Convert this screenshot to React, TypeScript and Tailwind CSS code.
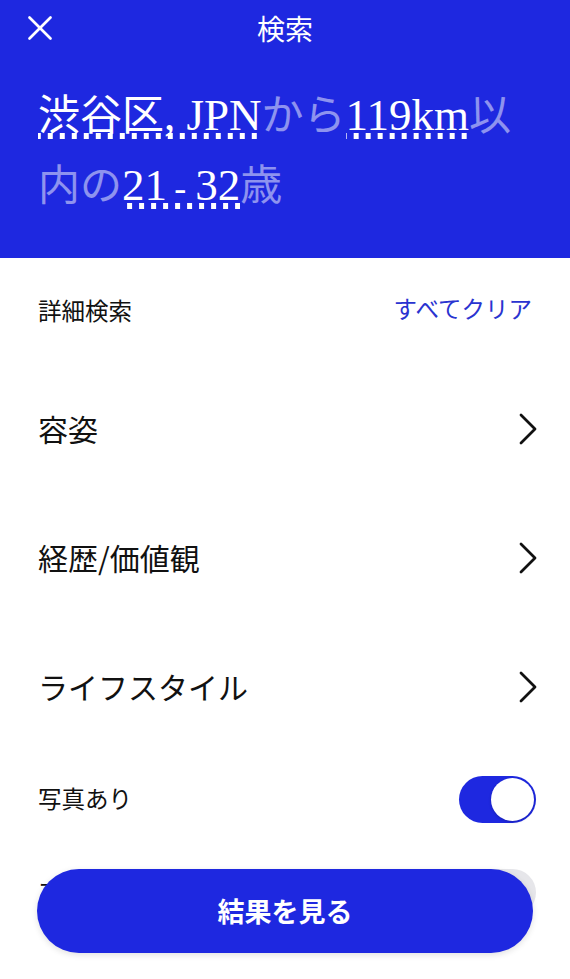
import React from "react";

const sans = { fontFamily: '"Noto Sans CJK JP", "Noto Sans", sans-serif' };

function Chevron() {
  return (
    <svg width="18" height="32" viewBox="0 0 18 32" fill="none" className="shrink-0">
      <polyline points="2,2 16,16 2,30" stroke="#111" strokeWidth="2.8" strokeLinecap="round" strokeLinejoin="round" />
    </svg>
  );
}

function Toggle({ on }: { on: boolean }) {
  return (
    <div
      className={
        on
          ? "w-[77px] h-[47px] rounded-full bg-[#1e28e0] p-[2px] flex justify-end"
          : "w-[77px] h-[47px] rounded-full bg-[#e6e6ea] p-[2px] flex justify-start"
      }
    >
      <div className="w-[43px] h-[43px] rounded-full bg-white shadow-[0_1px_3px_rgba(0,0,0,0.2)]" />
    </div>
  );
}

const dots =
  "bg-[linear-gradient(to_right,#ffffff_5px,transparent_5px)] bg-[length:12px_6px] bg-repeat-x bg-bottom text-white";

export default function App() {
  return (
    <div className="relative w-[570px] h-[979px] overflow-hidden bg-white" style={sans}>
      <header className="bg-[#1e28e0] h-[258px] flex flex-col">
        <div className="relative h-[56px] flex items-center justify-center">
          <svg className="absolute left-[28px] top-[16px]" width="24" height="24" viewBox="0 0 24 24" fill="none">
            <line x1="1.5" y1="1.5" x2="22.5" y2="22.5" stroke="#fff" strokeWidth="2.6" strokeLinecap="round" />
            <line x1="22.5" y1="1.5" x2="1.5" y2="22.5" stroke="#fff" strokeWidth="2.6" strokeLinecap="round" />
          </svg>
          <span className="text-white text-[28px] leading-none">検索</span>
        </div>
        <p
          className="mt-[25px] px-[38px] text-[42px] leading-[69px] text-white/50"
          style={{ fontFamily: '"Liberation Serif", "Noto Sans CJK JP", serif' }}
        >
          <span className={dots}>
            渋谷区<span className="text-[45px]">, JPN</span>
          </span>
          から
          <span className={dots}>
            <span className="text-[45px]">119km</span>
          </span>
          以<br />
          内の
          <span className={dots}>
            <span className="text-[45px]">
              21<span className="text-[36px]">{"\u2009- "}</span>32
            </span>
          </span>
          歳
        </p>
      </header>

      <main className="px-[38px]">
        <div className="h-[106px] flex items-center justify-between">
          <span className="text-[23.5px] text-[#111]">詳細検索</span>
          <span className="text-[23.5px] text-[#2a33d0] -mt-[4px]">すべてクリア</span>
        </div>
        {["容姿", "経歴/価値観", "ライフスタイル"].map((t) => (
          <div key={t} className="h-[129px] flex items-center justify-between">
            <span className="text-[30px] text-[#111]">{t}</span>
            <div className="-mr-[5px]">
              <Chevron />
            </div>
          </div>
        ))}
        <div className="h-[96px] flex items-center justify-between">
          <span className="text-[23.5px] text-[#111]">写真あり</span>
          <div className="-mr-[4px]">
            <Toggle on />
          </div>
        </div>
        <div className="h-[90px] flex items-center justify-between">
          <span className="text-[23.5px] text-[#111]">アクティブ</span>
          <div className="-mr-[4px]">
            <Toggle on={false} />
          </div>
        </div>
      </main>

      <button className="absolute left-[37px] right-[37px] bottom-[26px] h-[84px] rounded-full bg-[#1e28e0] flex items-center justify-center shadow-[0_2px_6px_rgba(0,0,0,0.12)]">
        <span className="text-white text-[27px] font-bold">結果を見る</span>
      </button>
    </div>
  );
}
